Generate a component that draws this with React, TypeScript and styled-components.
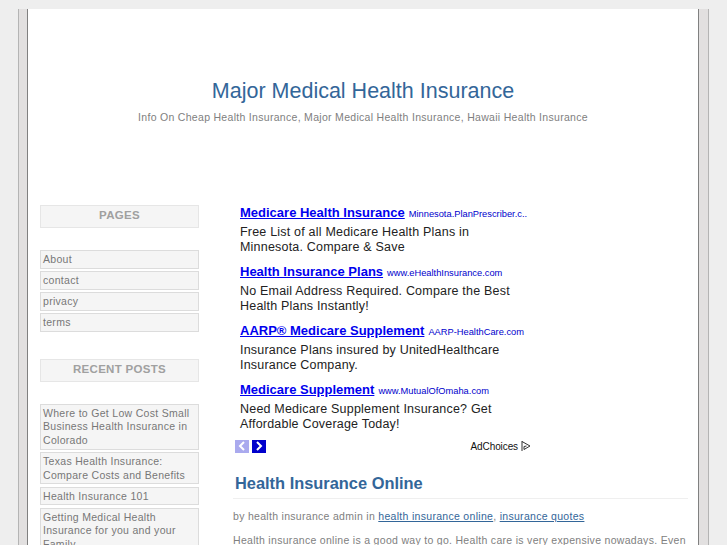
import React from 'react';
import styled, { createGlobalStyle } from 'styled-components';

const GlobalStyle = createGlobalStyle`
  html, body {
    margin: 0;
    height: 545px;
    overflow: hidden;
    background: #eeeeee;
    font-family: "Liberation Sans", Arial, sans-serif;
  }
`;

const Wrapper = styled.div`
  width: 691px;
  height: 536px;
  margin: 9px 0 0 18px;
  box-sizing: border-box;
  background: #e2e0e0;
  border-left: 1px solid #b4b4b4;
  border-right: 1px solid #b4b4b4;
  padding: 0 9px 0 8px;
  overflow: hidden;
`;

const Page = styled.div`
  height: 100%;
  box-sizing: border-box;
  background: #fff;
  border-left: 1px solid #808080;
  border-right: 1px solid #808080;
  overflow: hidden;
`;

const Header = styled.header`
  height: 196px;
  padding-top: 67px;
  box-sizing: border-box;
  text-align: center;
`;

const SiteTitle = styled.h1`
  margin: 0;
  font-size: 21.5px;
  line-height: 30px;
  font-weight: normal;
  color: #336699;
`;

const Tagline = styled.p`
  margin: 3px 0 0;
  font-size: 10.5px;
  line-height: 16px;
  letter-spacing: 0.3px;
  color: #808080;
`;

const Columns = styled.div`
  display: flex;
  padding-left: 12px;
`;

const Sidebar = styled.aside`
  width: 159px;
  flex-shrink: 0;
`;

const WidgetTitle = styled.h2`
  margin: 0 0 22px;
  height: 23px;
  box-sizing: border-box;
  border: 1px solid #e6e6e6;
  background: #f5f5f5;
  text-align: center;
  font-size: 11.5px;
  line-height: 19px;
  letter-spacing: 0.3px;
  font-weight: bold;
  color: #a0a0a0;
`;

const NavList = styled.ul`
  list-style: none;
  margin: 0 0 27px;
  padding: 0;
  display: flex;
  flex-direction: column;
  gap: 2.35px;
`;

const NavItem = styled.li`
  border: 1px solid #dcdcdc;
  background: #f5f5f5;
  padding: 2px 2px 1px;
  font-size: 10.5px;
  line-height: 13.65px;
  letter-spacing: 0.3px;
  color: #777;
`;

const Main = styled.main`
  margin-left: 34px;
  width: 455px;
  flex-shrink: 0;
`;

const AdBlock = styled.section`
  margin-top: -1px;
  padding-left: 7px;
  width: 300px;
`;

const Ad = styled.div`
  margin-bottom: 8px;
`;

const AdHead = styled.div`
  line-height: 16px;
  white-space: nowrap;
`;

const AdLink = styled.a`
  font-size: 13px;
  font-weight: bold;
  color: #0000ee;
  text-decoration: underline;
`;

const AdUrl = styled.span`
  margin-left: 4px;
  font-size: 9.3px;
  color: #0000cc;
`;

const AdText = styled.p`
  margin: 3px 0 0;
  width: 285px;
  font-size: 12.5px;
  line-height: 15px;
  letter-spacing: 0.2px;
  color: #222;
`;

const AdFooter = styled.div`
  display: flex;
  align-items: center;
  justify-content: space-between;
  width: 291px;
  margin-top: -1px;
  height: 14px;
`;

const Arrows = styled.div`
  display: flex;
  gap: 3px;
  margin-left: -5px;
`;

const Arrow = styled.span<{ $active?: boolean }>`
  display: flex;
  align-items: center;
  justify-content: center;
  width: 14px;
  height: 13px;
  background: ${(p) => (p.$active ? '#0000cc' : '#aaaaee')};
`;

const AdChoices = styled.span`
  display: flex;
  align-items: center;
  gap: 3px;
  font-size: 10px;
  letter-spacing: -0.1px;
  color: #111;
`;

const PostTitle = styled.h2`
  margin: 19px 0 0;
  padding: 0 0 4px 2px;
  font-size: 16.4px;
  line-height: 22px;
  font-weight: bold;
  color: #336699;
  border-bottom: 1px solid #efefef;
`;

const PostMeta = styled.p`
  margin: 9px 0 0;
  font-size: 10.5px;
  line-height: 16px;
  letter-spacing: 0.3px;
  color: #808080;

  a {
    color: #336699;
    text-decoration: underline;
  }
`;

const PostBody = styled.p`
  margin: 8px 0 0;
  font-size: 10.5px;
  line-height: 16px;
  letter-spacing: 0.3px;
  color: #808080;
  white-space: nowrap;
`;

const ads = [
  {
    title: 'Medicare Health Insurance',
    url: 'Minnesota.PlanPrescriber.c..',
    text: 'Free List of all Medicare Health Plans in Minnesota. Compare & Save',
  },
  {
    title: 'Health Insurance Plans',
    url: 'www.eHealthInsurance.com',
    text: 'No Email Address Required. Compare the Best Health Plans Instantly!',
  },
  {
    title: 'AARP® Medicare Supplement',
    url: 'AARP-HealthCare.com',
    text: 'Insurance Plans insured by UnitedHealthcare Insurance Company.',
  },
  {
    title: 'Medicare Supplement',
    url: 'www.MutualOfOmaha.com',
    text: 'Need Medicare Supplement Insurance? Get Affordable Coverage Today!',
  },
];

const pages = ['About', 'contact', 'privacy', 'terms'];

const posts = [
  'Where to Get Low Cost Small Business Health Insurance in Colorado',
  'Texas Health Insurance: Compare Costs and Benefits',
  'Health Insurance 101',
  'Getting Medical Health Insurance for you and your Family',
];

const App: React.FC = () => {
  return (
    <>
      <GlobalStyle />
      <Wrapper>
        <Page>
          <Header>
            <SiteTitle>Major Medical Health Insurance</SiteTitle>
            <Tagline>Info On Cheap Health Insurance, Major Medical Health Insurance, Hawaii Health Insurance</Tagline>
          </Header>
          <Columns>
            <Sidebar>
              <WidgetTitle>PAGES</WidgetTitle>
              <NavList>
                {pages.map((p) => (
                  <NavItem key={p}>{p}</NavItem>
                ))}
              </NavList>
              <WidgetTitle>RECENT POSTS</WidgetTitle>
              <NavList>
                {posts.map((p) => (
                  <NavItem key={p}>{p}</NavItem>
                ))}
              </NavList>
            </Sidebar>
            <Main>
              <AdBlock>
                {ads.map((ad) => (
                  <Ad key={ad.title}>
                    <AdHead>
                      <AdLink>{ad.title}</AdLink>
                      <AdUrl>{ad.url}</AdUrl>
                    </AdHead>
                    <AdText>{ad.text}</AdText>
                  </Ad>
                ))}
                <AdFooter>
                  <Arrows>
                    <Arrow>
                      <svg width="8" height="10" viewBox="0 0 8 10">
                        <path d="M6 1 L2 5 L6 9" fill="none" stroke="#fff" strokeWidth="2" />
                      </svg>
                    </Arrow>
                    <Arrow $active>
                      <svg width="8" height="10" viewBox="0 0 8 10">
                        <path d="M2 1 L6 5 L2 9" fill="none" stroke="#fff" strokeWidth="2" />
                      </svg>
                    </Arrow>
                  </Arrows>
                  <AdChoices>
                    AdChoices
                    <svg width="10" height="12" viewBox="0 0 10 12">
                      <path d="M1 1 V11 M1 1.5 L9 6 L3 9.5 V6.5 L5.5 6" fill="none" stroke="#333" strokeWidth="1" />
                    </svg>
                  </AdChoices>
                </AdFooter>
              </AdBlock>
              <PostTitle>Health Insurance Online</PostTitle>
              <PostMeta>
                by health insurance admin in <a>health insurance online</a>, <a>insurance quotes</a>
              </PostMeta>
              <PostBody>Health insurance online is a good way to go. Health care is very expensive nowadays. Even</PostBody>
            </Main>
          </Columns>
        </Page>
      </Wrapper>
    </>
  );
};

export default App;
